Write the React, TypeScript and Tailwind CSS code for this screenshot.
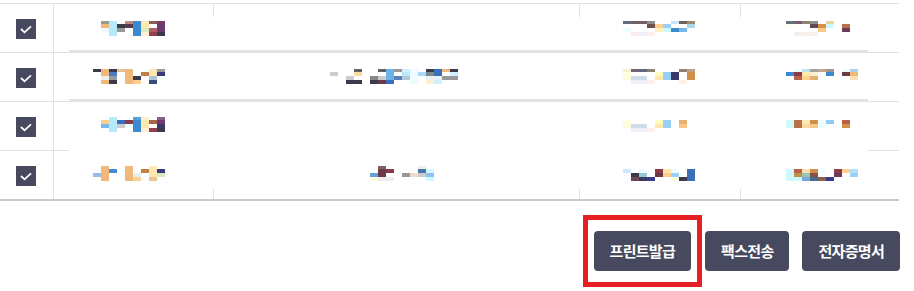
import React from "react";

type Blob = string[];

const ROW_Y = [0, 3, 7, 11];
const ROW_H = [3, 4, 4, 4];

function Mosaic({ cols, top }: { cols: Blob; top: number }) {
  return (
    <svg
      width={cols.length * 8}
      height={15}
      className="relative z-10 shrink-0"
      style={{ marginTop: top }}
    >
      {cols.map((col, ci) =>
        col.split(" ").map((c, ri) =>
          c === "." ? null : (
            <rect key={`${ci}-${ri}`} x={ci * 8} y={ROW_Y[ri]} width={8} height={ROW_H[ri]} fill={`#${c}`} />
          )
        )
      )}
    </svg>
  );
}

const rows: { top: number; c2: Blob; c3: Blob | null; c4: Blob; c5: Blob }[] = [
  {
    top: 17,
    c2: [
      ". . . .",
      "9a9a90 f0b87a eefcff .",
      "b8e8fb b8e8fb b8e8fb b8e8fb",
      ". 3a3a4a 999999 .",
      "b88a8a 5a3a48 . .",
      "3a8ad0 3a8ad0 3a8ad0 3a8ad0",
      "fde8b0 fde8b0 d8ecc0 fdf0d0",
      "8a6050 . b06060 904050",
      "6e3a70 6e3a70 6e3a70 3a3a4a",
    ],
    c3: null,
    c4: [
      "607080 . eefcff .",
      "706060 . . f8eef0",
      "706060 . . eef0f8",
      "909090 705048 . fdf0e8",
      ". fdd090 fdf0c0 .",
      ". 98d0f8 d0f8ff .",
      "c0e8ff . 3a8ad0 .",
      "706060 . 78b8e8 .",
      "a08870 a8d8e8 . .",
    ],
    c5: [
      "607080 fdfdf0 . .",
      "706070 . . eef0f8",
      "908070 . . fdf0e8",
      "909090 604850 . f8eef0",
      ". d89048 f8c888 .",
      "f0d0a8 d0f8ff . .",
      ". . . .",
      ". b87048 6a3a58 .",
    ],
  },
  {
    top: 16,
    c2: [
      "3a3a4a . . .",
      "f0b87a f0b87a eeeeee f0b87a",
      "3a3a4a 4a7ac0 999999 3a3a4a",
      "e8c090 . . .",
      "f0b87a f0b87a f0b87a f0b87a",
      ". . 3a3a4a fdd090",
      ". c08048 . .",
      "fde8b0 fde8b0 b0c4d8 3a4a78",
      "999999 3a3a80 . .",
    ],
    c3: [
      ". cccccc . .",
      ". . . .",
      ". . cccccc 3a3a4a",
      "606060 fdd8a0 . 3a3a4a",
      ". . . .",
      ". . 888888 3a3a4a",
      "606060 . d0c8d0 6a3a48",
      "6ab4e8 6ab4e8 6ab4e8 3a70b8",
      "999999 . 5a80c0 .",
      "d0f0ff b8e8fb b0c8d8 .",
      "eefcff eefcff eefcff eefcff",
      ". a8d8fb . .",
      "3a3a4a 7a8a90 eef0f8 fdf0d0",
      "3a70b8 3a70b8 eef0f8 d0f0ff",
      "f0b87a . 999999 .",
      "3a3a4a d0f0ff 999999 .",
    ],
    c4: [
      "fdf0d0 fdfde0 fdfde0 .",
      "706878 . d0dce8 eef0f8",
      "606880 . d0dce8 eef0f8",
      "908070 . . fdf0e8",
      ". fdfdc0 fde8b0 .",
      ". 98d0f8 98d0f8 .",
      ". 3a3a6a 3a3a6a .",
      "908070 . . fdf0e8",
      "c0a088 d09048 d09048 .",
    ],
    c5: [
      ". 3a8ad0 . .",
      "eefcff 8a3a48 b86048 .",
      "c0e0f0 fde8b0 fdd090 .",
      "a0a0a0 fdf0d0 e8b070 .",
      "c0a888 . . .",
      "a09890 3a8ad0 . .",
      ". . . .",
      "eefcff 6a3a48 . .",
      "b0d0e8 f0b870 fde0b0 .",
    ],
  },
  {
    top: 15,
    c2: [
      ". . . .",
      ". fdd090 78b8e8 .",
      "b8e8fb b8e8fb b8e8fb b8e8fb",
      ". 3a70b8 cccccc .",
      ". 8a3a48 eefcff .",
      "5aa0d8 3a8ad0 3a8ad0 3a8ad0",
      "fdf0d0 fde8b0 fde8b0 fdf0d0",
      ". a86848 . 904050",
      "886080 6e3a70 3a3a6a 3a3a4a",
    ],
    c3: null,
    c4: [
      ". fdfde0 fdfde0 .",
      ". . d0dce8 eef0f8",
      ". . d0dce8 eef0f8",
      ". . . fdf0e8",
      ". fdfdc0 fde8b0 .",
      ". 98d0f8 98d0f8 .",
      ". . . .",
      ". e8b070 f8c888 .",
    ],
    c5: [
      ". d0f8ff d0f8ff .",
      ". b87048 b87048 .",
      ". fde8b0 fdd8a0 .",
      ". d09048 f8c888 .",
      ". eefcff eefcff .",
      ". 90c8f8 . .",
      ". . . .",
      ". b86048 d09048 .",
    ],
  },
  {
    top: 15,
    c2: [
      ". . 98bce0 .",
      "f0b87a f0b87a f0b87a f0b87a",
      ". 4a8ad0 . .",
      ". . . .",
      "f0b87a f0b87a f0b87a f0b87a",
      ". . eeeeee fdd090",
      ". c08048 . .",
      "fde8b0 fde8b0 fde8b0 e8c890",
      ". 3a3a80 d8ecc0 .",
    ],
    c3: [
      ". . . .",
      ". . . .",
      ". . . .",
      ". . . .",
      ". . . .",
      ". . 6aa0d8 fdfde0",
      "806060 6a3a48 6a3a48 eeeeee",
      ". 8a3a48 . eeeeee",
      ". . . .",
      ". . 999999 .",
      ". . f0dcc8 .",
      "eeeeee 4a7aa8 cccccc .",
      ". d0f8ff 90c0f8 d0f8ff",
    ],
    c4: [
      ". d0e8ff . .",
      ". . 3a3a4a 6a4a58",
      ". eefcff 98c8d8 3a3a5a",
      ". . . 3a3a90",
      ". 8a3a48 6a3a48 .",
      ". fde8b0 fdd090 .",
      ". eefcff 98d0f8 fdfde0",
      ". . . 3a3a4a",
      ". 3a70b8 3a70b8 3a70b8",
    ],
    c5: [
      ". d0f8ff d0f8ff d0f8ff",
      ". b86048 c09048 d0f8ff",
      ". fde0b0 90c8b0 78a8d8",
      ". d09048 8a5048 4a6a90",
      ". eefcff . 8a6050",
      ". . . 3a3a90",
      ". 8a3a48 6a3a58 .",
      ". fdd090 . .",
      ". b0e0ff 98d0f8 .",
    ],
  },
];

function Checkbox() {
  return (
    <div className="w-5 h-5 bg-[#474a5f] flex items-center justify-center">
      <svg width="20" height="20" viewBox="0 0 20 20">
        <polyline points="5,10 8.5,13.3 15,7.3" fill="none" stroke="#ffffff" strokeWidth="1.8" />
      </svg>
    </div>
  );
}

export default function App() {
  return (
    <div className="relative w-[914px] h-[291px] bg-white overflow-hidden font-['Noto_Sans_CJK_KR','Noto_Sans',sans-serif]">
      <div className="h-[3px]" />
      <div className="w-[899px] border-t border-[#e2e2e6]">
        {rows.map((r, i) => (
          <div
            key={i}
            className={`grid grid-cols-[54px_160px_366px_161px_158px] h-[49px] ${
              i === rows.length - 1 ? "border-b-2 border-[#c6cad2] h-[50px]" : "border-b border-[#e2e2e6]"
            }`}
          >
            <div className="border-r border-[#e2e2e6] flex justify-center pt-[15px] pr-px">
              <Checkbox />
            </div>
            <div className="border-r border-[#e2e2e6] flex items-start pl-[39px]">
              <Mosaic cols={r.c2} top={r.top} />
            </div>
            <div className="border-r border-[#e2e2e6] flex items-start pl-[116px]">
              {r.c3 && <Mosaic cols={r.c3} top={r.top} />}
            </div>
            <div className="border-r border-[#e2e2e6] flex items-start pl-[43px]">
              <Mosaic cols={r.c4} top={r.top} />
            </div>
            <div className="flex items-start pl-[45px]">
              <Mosaic cols={r.c5} top={r.top} />
            </div>
          </div>
        ))}
      </div>

      <div className="absolute left-[69px] top-[17px] w-[799px] h-[172px] bg-white">
        <div className="mt-[33px] h-[3px] bg-[#e3e3e8]" />
        <div className="mt-[46px] h-[3px] bg-[#e3e3e8]" />
      </div>

      <div className="flex justify-end pr-[14px] pt-[30px]">
        <button className="h-10 px-4 rounded-[4px] bg-[#474a5f] text-white text-[15px] tracking-[-0.7px] font-bold">프린트발급</button>
        <button className="ml-[14px] h-10 px-4 rounded-[4px] bg-[#474a5f] text-white text-[15px] tracking-[-0.7px] font-bold">팩스전송</button>
        <button className="ml-[13px] h-10 px-4 rounded-[4px] bg-[#474a5f] text-white text-[15px] tracking-[-0.7px] font-bold">전자증명서</button>
      </div>

      <div className="absolute left-[583px] top-[215px] w-[119px] h-[72px] border-[5px] border-[#e81e25]" />
    </div>
  );
}
